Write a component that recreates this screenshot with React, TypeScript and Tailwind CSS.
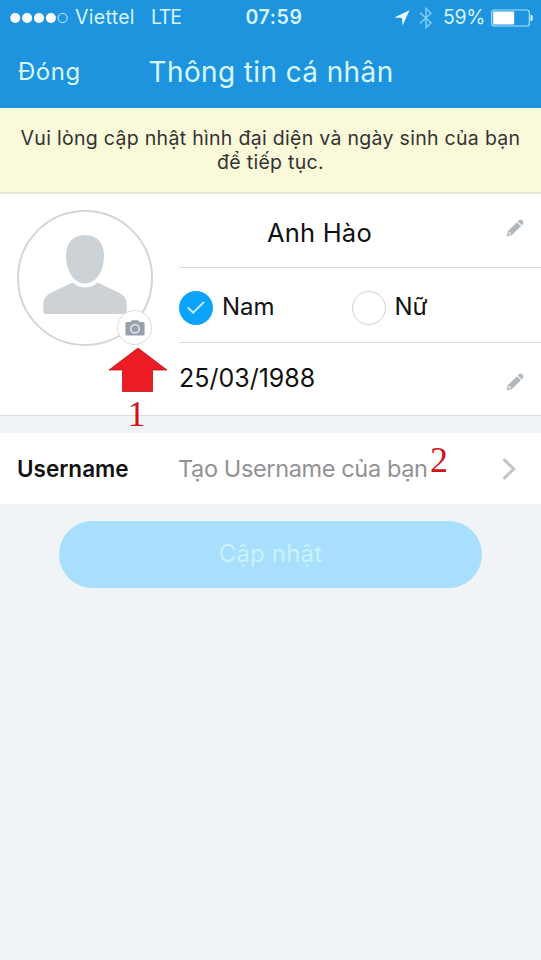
import { FC, ReactNode } from 'react'

const SignalDots: FC = () => (
  <svg width="58" height="12" viewBox="0 0 58 12" className="shrink-0">
    {[5.2, 17.1, 29, 40.9].map((cx) => (
      <circle key={cx} cx={cx} cy="6" r="5" fill="#fff" />
    ))}
    <circle cx="52.6" cy="6" r="4.6" fill="none" stroke="#c9f1ff" strokeWidth="1" />
  </svg>
)

const LocationIcon: FC = () => (
  <svg width="16" height="16" viewBox="0 0 16 16" className="shrink-0">
    <path d="M15.5 0.3 L8.6 15.6 L8 8 L0.3 7.4 Z" fill="#effcff" />
  </svg>
)

const BluetoothIcon: FC = () => (
  <svg width="14" height="22" viewBox="0 0 14 22" className="shrink-0">
    <path
      d="M1 5.6 L12 15.8 L7 20.6 V1.4 L12 6.2 L1 16.4"
      fill="none"
      stroke="#7fcbf7"
      strokeWidth="1.5"
    />
  </svg>
)

const BatteryIcon: FC = () => (
  <svg width="42" height="18" viewBox="0 0 42 18" className="shrink-0">
    <rect x="0.7" y="1" width="37.6" height="16" rx="2.6" fill="none" stroke="#a5e3fb" strokeWidth="1.2" />
    <rect x="2.2" y="2.4" width="21" height="13.2" rx="1" fill="#fff" />
    <path d="M39.4 6 h1 a1.6 1.6 0 0 1 1.4 1.6 v2.8 a1.6 1.6 0 0 1 -1.4 1.6 h-1 z" fill="#c9f1ff" />
  </svg>
)

const PencilIcon: FC = () => (
  <svg width="18" height="18" viewBox="0 0 18 18" className="shrink-0">
    <path d="M0.6 17.4 L2 12 L11 3.2 L15 7.2 L6 16 Z" fill="#b3b8bc" />
    <path d="M11.8 2.400 L13 1.200 Q14.400 0 15.900 1 L16.900 2 Q18 3.500 17 5 L15.800 6.400 Z" fill="#b3b8bc" />
    <circle cx="3.700" cy="14.200" r="1" fill="#fff" />
  </svg>
)

const PersonIcon: FC = () => (
  <svg width="84" height="80" viewBox="0 0 84 80">
    <path
      d="M42 0 C54.5 0 61 8.500 61 21 C61 36 53 48.500 42 48.500 C31 48.500 23 36 23 21 C23 8.500 29.500 0 42 0 Z"
      fill="#cdd2d6"
    />
    <path
      d="M29.500 47.500 C36 54 48 54 54.500 47.500 L76.500 58 Q83.700 62 83.700 69 V76.500 Q83.700 79 81 79 H3 Q0.300 79 0.300 76.500 V69 Q0.300 62 7.500 58 Z"
      fill="#cdd2d6"
    />
  </svg>
)

const CameraIcon: FC = () => (
  <svg width="20" height="16" viewBox="0 0 20 16">
    <path
      d="M2 2 H5.500 L6.600 0.600 Q7 0.200 7.600 0.200 H12.400 Q13 0.200 13.400 0.600 L14.500 2 H18 Q19.600 2 19.600 3.600 V14 Q19.600 15.500 18 15.500 H2 Q0.400 15.500 0.400 14 V3.600 Q0.400 2 2 2 Z"
      fill="#97a1ab"
    />
    <circle cx="10" cy="8.800" r="4.200" fill="none" stroke="#e9edf0" strokeWidth="1.400" />
  </svg>
)

type GenderOptionProps = {
  label: ReactNode
  checked?: boolean
}

const GenderOption: FC<GenderOptionProps> = ({ label, checked }) => (
  <div className="flex w-[172.500px] items-center gap-[9px]">
    {checked ? (
      <div className="flex size-[34px] items-center justify-center rounded-full bg-[#0ba3fb]">
        <svg width="18" height="13" viewBox="0 0 18 13">
          <path d="M0.800 6.500 L6.200 11.600 L17 0.900" fill="none" stroke="#c9f3ff" strokeWidth="1.900" />
        </svg>
      </div>
    ) : (
      <div className="size-[34px] rounded-full border border-[#cfcfd1] bg-white" />
    )}
    <span className="pb-[2px]">{label}</span>
  </div>
)

const StatusBar: FC = () => (
  <div className="flex h-9 items-center pl-[10px] text-[19.500px] text-[#d6f6ff]">
    <SignalDots />
    <span className="ml-[7px] w-[76px] tracking-[0.300px]">Viettel</span>
    <span className="w-[94.500px] tracking-[-1.300px]">LTE</span>
    <span className="w-[148.500px] font-semibold tracking-[0.600px]">07:59</span>
    <LocationIcon />
    <div className="ml-[9px]">
      <BluetoothIcon />
    </div>
    <span className="ml-[10px] w-[47.500px] tracking-[-0.400px]">59%</span>
    <BatteryIcon />
  </div>
)

export default function App() {
  return (
    <div className="h-[960px] w-[541px] overflow-hidden bg-[#f0f4f7] font-['Inter',sans-serif] whitespace-nowrap text-[#111]">
      <header className="h-[108px] bg-[#1e93de]">
        <StatusBar />
        <div className="flex h-[72px] items-center pl-[18px] text-[#d6f8ff]">
          <span className="w-[130.500px] text-[24px] tracking-[0.500px]">Đóng</span>
          <span className="text-[28px] tracking-[0.380px]">Thông tin cá nhân</span>
        </div>
      </header>

      <div className="h-[86px] border-b-2 border-[#e8e6da] bg-[#faf9da] pt-[19px] text-center text-[19.500px] leading-[23.500px] tracking-[0.300px] text-[#333]">
        <p>Vui lòng cập nhật hình đại diện và ngày sinh của bạn</p>
        <p>để tiếp tục.</p>
      </div>

      <section className="flex h-[222px] border-b border-[#dcdfe2] bg-white">
        <div className="w-[179px] pt-[16px] pl-[17px]">
          <div className="relative flex size-[136px] justify-center rounded-full border-2 border-[#d2d6d9] pt-[23px]">
            <PersonIcon />
            <div className="absolute top-[98px] left-[98px] flex size-[35px] items-center justify-center rounded-full border border-[#dcdcde] bg-white">
              <CameraIcon />
            </div>
            <div className="absolute top-[135px] left-[88.500px] flex w-[60px] flex-col items-center">
              <svg width="60" height="46" viewBox="0 0 60 46">
                <path d="M30 1 L59 23 H44.500 V44.500 H14.500 V23 H1 Z" fill="#ec1c24" stroke="#b5161c" strokeWidth="0.800" />
              </svg>
              <span className="mt-px mr-[2px] font-['Liberation_Serif',serif] text-[36px] leading-[40px] text-[#d0141b]">1</span>
            </div>
          </div>
        </div>
        <div className="flex-1">
          <div className="flex h-[74px] items-center justify-between border-b border-[#d9dadc] pr-[17px] pl-[88px]">
            <span className="pt-[5px] text-[25.500px] tracking-[0.200px]">Anh Hào</span>
            <div className="pb-[5px]">
              <PencilIcon />
            </div>
          </div>
          <div className="flex h-[75px] items-center border-b border-[#d9dadc] pt-[5px] text-[24px]">
            <GenderOption checked label="Nam" />
            <GenderOption label="Nữ" />
          </div>
          <div className="flex h-[72px] items-center justify-between pr-[17px]">
            <span className="text-[25px]">25/03/1988</span>
            <div className="pt-[5px]">
              <PencilIcon />
            </div>
          </div>
        </div>
      </section>

      <section className="mt-[17px] flex h-[71px] items-center bg-white pl-[17px]">
        <span className="w-[161px] text-[22.500px] font-semibold">Username</span>
        <div className="relative flex-1 text-[23.500px] tracking-[-0.370px] text-[#929294]">
          <span>Tạo Username của bạn</span>
          <span className="absolute top-[-9px] left-[252px] font-['Liberation_Serif',serif] text-[36px] leading-[36px] tracking-normal text-[#d0141b]">2</span>
        </div>
        <svg width="14" height="22" viewBox="0 0 14 22" className="mr-[25px]">
          <path d="M1.500 1.200 L11.800 11 L1.500 20.800" fill="none" stroke="#c3c3c9" strokeWidth="3" />
        </svg>
      </section>

      <button className="mx-auto mt-[17px] block h-[67px] w-[423px] rounded-full bg-[#a7dffd] pb-[2px] text-[24px] tracking-[0.150px] text-[#caf2ff]">
        Cập nhật
      </button>
    </div>
  )
}
